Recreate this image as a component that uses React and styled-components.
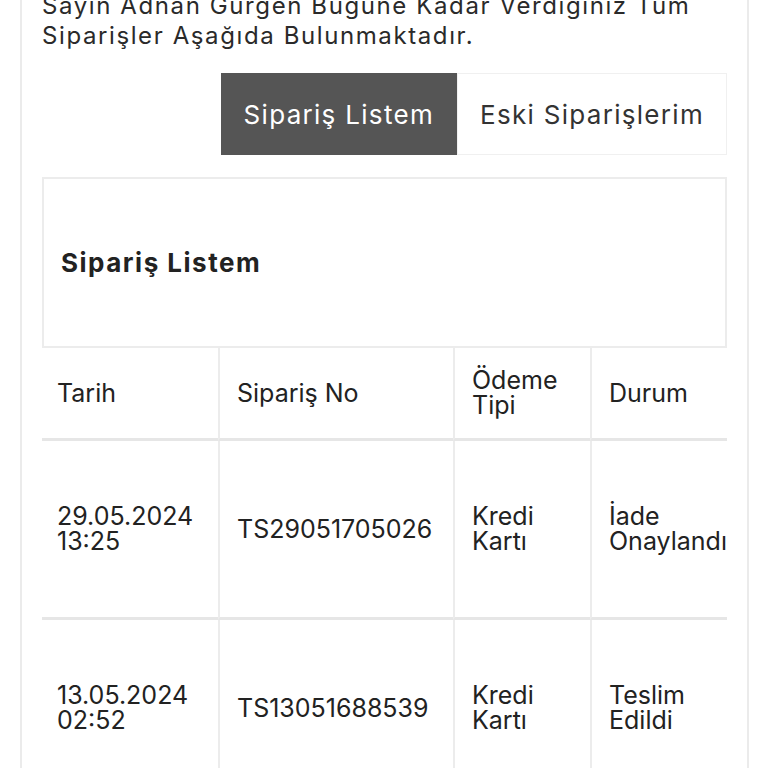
import React from 'react';
import styled, { createGlobalStyle } from 'styled-components';

const GlobalStyle = createGlobalStyle`
    html, body {
        margin: 0;
        padding: 0;
        background: #ffffff;
        overflow: hidden;
    }
    body {
        font-family: Inter, "Noto Sans", sans-serif;
        color: #222222;
    }
`;

const Card = styled.div`
    margin: 0 19px 0 20px;
    padding: 0 20px 40px 20px;
    border-left: 2px solid #ebebeb;
    border-right: 2px solid #ebebeb;
    min-height: 800px;
`;

const Intro = styled.p`
    margin: -9px 0 0 0;
    font-size: 24px;
    line-height: 30px;
    letter-spacing: 1.6px;
    color: #2a2a2a;
`;

const Tabs = styled.div`
    display: flex;
    justify-content: flex-end;
    margin-top: 22px;
`;

const Tab = styled.button`
    height: 82px;
    padding: 0 22px;
    font-family: inherit;
    font-size: 26px;
    letter-spacing: 1.3px;
    border: 1px solid ${(p) => (p.$active ? '#555555' : '#f0f0f0')};
    background: ${(p) => (p.$active ? '#555555' : '#ffffff')};
    color: ${(p) => (p.$active ? '#ffffff' : '#333333')};
    cursor: pointer;
`;

const Panel = styled.div`
    margin-top: 22px;
    height: 171px;
    box-sizing: border-box;
    border: 2px solid #ececec;
    padding: 0 17px;
    display: flex;
    align-items: center;
`;

const PanelTitle = styled.h2`
    margin: 0;
    font-size: 26px;
    font-weight: 700;
    letter-spacing: 1.5px;
    color: #222222;
`;

const TableWrap = styled.div`
    overflow: hidden;
    width: 100%;
`;

const Table = styled.table`
    border-collapse: separate;
    border-spacing: 0;
    table-layout: fixed;
    width: 720px;
`;

const Cell = styled.td`
    height: ${(p) => p.$h}px;
    padding: 0 6px 0 ${(p) => (p.$first ? 15 : 17)}px;
    vertical-align: middle;
    text-align: left;
    font-weight: 400;
    font-size: 25px;
    line-height: 25px;
    color: #222222;
    border-left: ${(p) => (p.$first ? 'none' : '2px solid #ececec')};
    border-bottom: 3px solid #e6e6e6;
    overflow: hidden;
`;

const NoWrap = styled.span`
    white-space: nowrap;
`;

const headers = ['Tarih', 'Sipariş No', 'Ödeme Tipi', 'Durum'];

const orders = [
    { date: '29.05.2024', time: '13:25', no: 'TS29051705026', pay: 'Kredi Kartı', status: 'İade Onaylandı' },
    { date: '13.05.2024', time: '02:52', no: 'TS13051688539', pay: 'Kredi Kartı', status: 'Teslim Edildi' },
];

const App = () => {
    return (
        <>
            <GlobalStyle />
            <Card>
                <Intro>
                    Sayın Adnan Gürgen Bugüne Kadar Verdiğiniz Tüm Siparişler Aşağıda Bulunmaktadır.
                </Intro>
                <Tabs>
                    <Tab $active>Sipariş Listem</Tab>
                    <Tab>Eski Siparişlerim</Tab>
                </Tabs>
                <Panel>
                    <PanelTitle>Sipariş Listem</PanelTitle>
                </Panel>
                <TableWrap>
                    <Table>
                        <colgroup>
                            <col style={{ width: 176 }} />
                            <col style={{ width: 235 }} />
                            <col style={{ width: 137 }} />
                            <col style={{ width: 172 }} />
                        </colgroup>
                        <thead>
                            <tr>
                                {headers.map((h, i) => (
                                    <Cell as="th" key={h} $h={90} $first={i === 0}>
                                        {h}
                                    </Cell>
                                ))}
                            </tr>
                        </thead>
                        <tbody>
                            {orders.map((o) => (
                                <tr key={o.no}>
                                    <Cell $h={176} $first>
                                        {o.date}
                                        <br />
                                        {o.time}
                                    </Cell>
                                    <Cell $h={176}>{o.no}</Cell>
                                    <Cell $h={176}>{o.pay}</Cell>
                                    <Cell $h={176}>
                                        {o.status.split(' ').map((w, i) => (
                                            <React.Fragment key={w}>
                                                {i > 0 && <br />}
                                                <NoWrap>{w}</NoWrap>
                                            </React.Fragment>
                                        ))}
                                    </Cell>
                                </tr>
                            ))}
                        </tbody>
                    </Table>
                </TableWrap>
            </Card>
        </>
    );
};

export default App;
